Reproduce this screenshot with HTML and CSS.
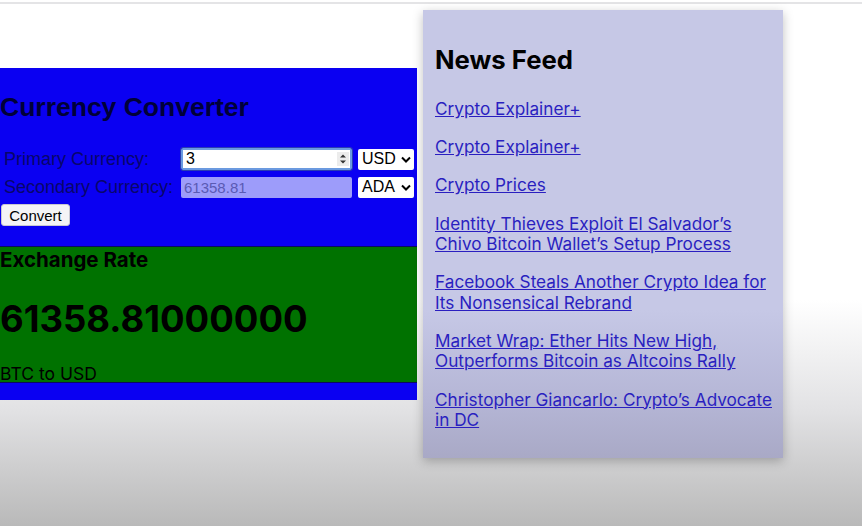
FILE: index.html
```html
<!DOCTYPE html>
<html>
<head>
<meta charset="utf-8">
<link rel="stylesheet" href="styles.css">
</head>
<body>
<div class="chrome-line"></div>
<div class="app">
  <div class="left">
    <div class="converter">
      <h2 class="conv-title">Currency Converter</h2>
      <div class="form">
        <div class="row">
          <span class="label">Primary Currency:</span>
          <span class="input active">3<svg class="spin" width="12" height="14" viewBox="0 0 12 14"><rect width="12" height="14" fill="#ececec"/><path d="M3 5.5 L6 2.5 L9 5.5 Z M3 8.5 L6 11.5 L9 8.5 Z" fill="#333"/></svg></span>
          <span class="select">USD <svg width="10" height="7" viewBox="0 0 10 7"><path d="M1 1.5 L5 5.5 L9 1.5" fill="none" stroke="#000" stroke-width="2"/></svg></span>
        </div>
        <div class="row">
          <span class="label">Secondary Currency:</span>
          <span class="input disabled">61358.81</span>
          <span class="select">ADA <svg width="10" height="7" viewBox="0 0 10 7"><path d="M1 1.5 L5 5.5 L9 1.5" fill="none" stroke="#000" stroke-width="2"/></svg></span>
        </div>
        <button class="btn">Convert</button>
      </div>
      <div class="rate">
        <h3 class="rate-title">Exchange Rate</h3>
        <div class="rate-value">61358.81000000</div>
        <div class="rate-pair">BTC to USD</div>
      </div>
    </div>
  </div>
  <div class="news">
    <h2 class="news-title">News Feed</h2>
    <a class="news-link" href="#">Crypto Explainer+</a>
    <a class="news-link" href="#">Crypto Explainer+</a>
    <a class="news-link" href="#">Crypto Prices</a>
    <a class="news-link" href="#">Identity Thieves Exploit El Salvador’s Chivo Bitcoin Wallet’s Setup Process</a>
    <a class="news-link" href="#">Facebook Steals Another Crypto Idea for Its Nonsensical Rebrand</a>
    <a class="news-link" href="#">Market Wrap: Ether Hits New High, Outperforms Bitcoin as Altcoins Rally</a>
    <a class="news-link" href="#">Christopher Giancarlo: Crypto’s Advocate in DC</a>
  </div>
</div>
</body>
</html>
```
FILE: styles.css
```css
html, body {
  margin: 0;
  padding: 0;
  height: 100%;
}
body {
  background: linear-gradient(to bottom, #ffffff 0px, #ffffff 300px, #e2e2e4 410px, #b9b9b9 526px);
  font-family: "Liberation Sans", Arial, sans-serif;
  overflow: hidden;
}
.chrome-line {
  height: 2px;
  margin-top: 2px;
  background: #e4e4e6;
}
.app {
  display: flex;
  align-items: flex-start;
  gap: 6px;
  padding-top: 6px;
}
.left {
  width: 417px;
  padding-top: 58px;
}
.converter {
  background: #0a00f2;
  padding-bottom: 17px;
}
.conv-title {
  margin: 0;
  padding-top: 23px;
  height: 32px;
  font-size: 26.5px;
  line-height: 32px;
  color: #000038;
  font-weight: bold;
}
.form {
  padding: 22px 0 20px 0;
}
.row {
  display: flex;
  align-items: center;
  height: 28px;
}
.label {
  width: 181px;
  padding-left: 4px;
  box-sizing: border-box;
  font-size: 18px;
  color: #08066a;
  white-space: nowrap;
}
.input {
  width: 171px;
  height: 21px;
  box-sizing: border-box;
  display: flex;
  align-items: center;
  justify-content: space-between;
  padding: 0 3px;
  font-size: 15px;
  border-radius: 2px;
}
.input.active {
  background: #fff;
  border: 2px solid #6b9ae0;
  outline: 1px solid #2a3fb0;
  height: 22px;
  color: #000;
  font-size: 16px;
  padding-right: 1px;
}
.input.disabled {
  background: #9d9cfa;
  color: #5a5ab4;
}
.select {
  margin-left: 6px;
  width: 56px;
  height: 21px;
  box-sizing: border-box;
  background: #fff;
  border-radius: 2px;
  font-size: 16px;
  display: flex;
  align-items: center;
  justify-content: space-between;
  padding: 0 3px 0 4px;
  color: #000;
}
.btn {
  display: block;
  margin-left: 1px;
  margin-top: 3px;
  width: 69px;
  height: 22px;
  padding: 0;
  background: #f4f4f6;
  border: 1px solid #c8c8d0;
  border-radius: 3px;
  font-family: "Liberation Sans", Arial, sans-serif;
  font-size: 15px;
  color: #000;
}
.rate {
  background: #007200;
  border-top: 1px solid #0a0a60;
  border-bottom: 1px solid #0a0a60;
  height: 135px;
  font-family: Inter, "Open Sans", sans-serif;
  color: #000;
}
.rate-title {
  margin: 0;
  font-size: 20.5px;
  line-height: 26px;
  font-weight: 700;
}
.rate-value {
  margin-top: 24px;
  font-size: 36.5px;
  line-height: 44px;
  font-weight: 700;
}
.rate-pair {
  margin-top: 23px;
  font-size: 17.5px;
  line-height: 20px;
}
.news {
  width: 360px;
  height: 448px;
  box-sizing: border-box;
  padding: 35px 6px 0 12px;
  background: linear-gradient(to bottom, #c6c8e6 0px, #c6c8e6 300px, #b5b6d6 390px, #a9a9c6 448px);
  box-shadow: 0 3px 10px rgba(0, 0, 0, 0.25);
  font-family: Inter, "Open Sans", sans-serif;
  display: flex;
  flex-direction: column;
  align-items: flex-start;
}
.news-title {
  margin: 0 0 24px 0;
  font-size: 25.7px;
  line-height: 30px;
  font-weight: 700;
  color: #000;
}
.news-link {
  font-size: 17.2px;
  line-height: 20.5px;
  color: #2a1fc0;
  margin-bottom: 17.7px;
}
```
